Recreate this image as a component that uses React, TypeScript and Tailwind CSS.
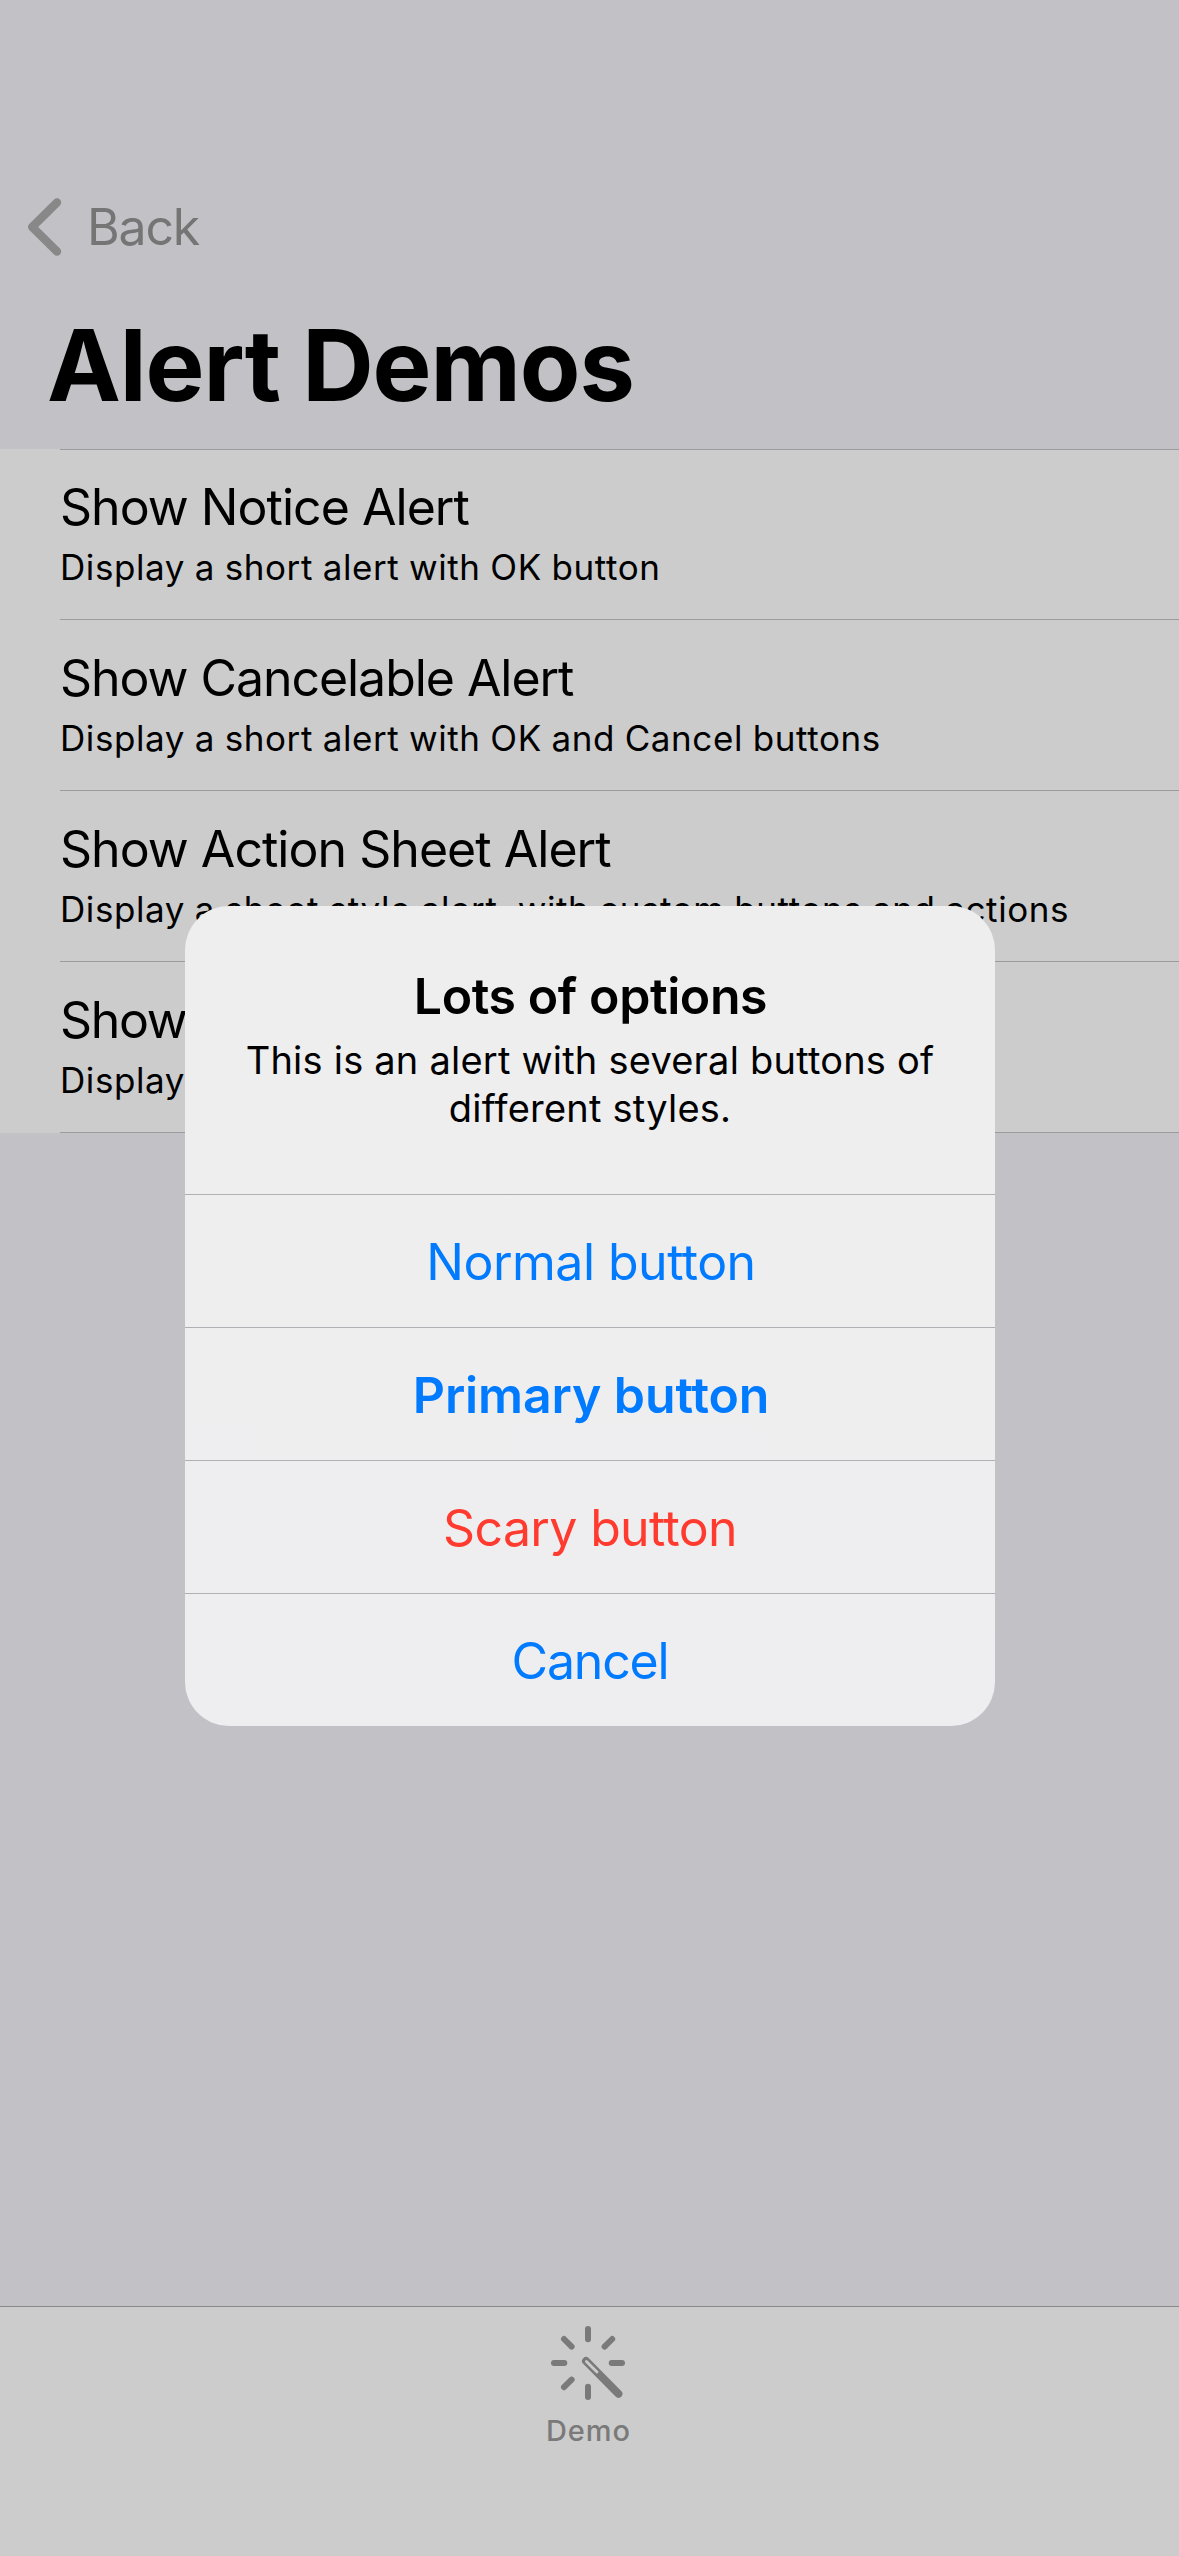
import React from 'react';

const rows = [
  { title: 'Show Notice Alert', text: 'Display a short alert with OK button', style: 'tracking-[-0.97px]' },
  { title: 'Show Cancelable Alert', text: 'Display a short alert with OK and Cancel buttons', style: 'tracking-[-1.05px]' },
  { title: 'Show Action Sheet Alert', text: 'Display a sheet style alert, with custom buttons and actions', style: 'tracking-[-0.97px]' },
  { title: 'Show', text: 'Display', style: 'tracking-[-1.3px]' },
];

const actions = [
  { label: 'Normal button', style: 'text-[#007aff] tracking-[-0.52px] pl-[2px]' },
  { label: 'Primary button', style: 'font-semibold text-[#007aff] tracking-[-0.12px] pl-[2px]' },
  { label: 'Scary button', style: 'text-[#ff3b30] tracking-[-0.66px]' },
  { label: 'Cancel', style: 'text-[#007aff] tracking-[-1.2px]' },
];

function Chevron() {
  return (
    <svg className="ml-[26px] block h-[62px] w-[40px] shrink-0" viewBox="0 0 40 62" fill="none">
      <path d="M31 6.5 6.2 31 31 55.5" stroke="#888888" strokeWidth="8.4" strokeLinecap="round" strokeLinejoin="round" />
    </svg>
  );
}

function WandIcon() {
  return (
    <svg className="block h-[76px] w-[76px]" viewBox="0 0 76 76" fill="none" strokeLinecap="round">
      <g stroke="#7a7a7a" strokeWidth="6">
        <path d="M38 4v10.3M38 61.7V72M4 38h10.3M61.7 38H72M14 14l7.6 7.6M54.6 21.6l7.6-7.6M14 62.2l7.6-7.6" />
      </g>
      <path d="M36 36l32.4 32.8" stroke="#7a7a7a" strokeWidth="8" />
      <path d="M36.4 36.4l10.6 10.6" stroke="#cccccc" strokeWidth="2.8" />
    </svg>
  );
}

export default function App() {
  return (
    <div className="relative flex h-[2556px] w-[1179px] flex-col overflow-hidden bg-[#c2c1c6] font-[Inter,sans-serif] text-black">
      <header className="flex h-[449px] flex-col pt-[160px]">
        <button className="flex h-[134px] items-center text-[50px] leading-[60px] tracking-[-1.2px] text-[#757575]">
          <Chevron />
          <span className="ml-[21px]">Back</span>
        </button>
        <h1 className="pl-[47px] text-[99px] leading-[142px] font-bold tracking-[-1.08px]">Alert Demos</h1>
      </header>

      <ul className="relative bg-[#cccccc]">
        <li className="absolute top-0 right-0 left-[60px] h-px bg-[#9c9c9e]" />
        {rows.map((row) => (
          <li key={row.title} className="ml-[60px] h-[171px] border-b border-[#9c9c9e] pt-[28px] whitespace-nowrap">
            <p className={`text-[50px] leading-[60px] ${row.style}`}>{row.title}</p>
            <p className="mt-[9px] text-[35px] leading-[42px] tracking-[0.6px] [word-spacing:-0.8px]">{row.text}</p>
          </li>
        ))}
      </ul>

      <nav className="mt-auto flex h-[250px] flex-col items-center border-t border-[#88888a] bg-[#cccccc] pt-[18px]">
        <div className="flex flex-col items-center pr-[3px]">
          <WandIcon />
          <span className="mt-[10px] pl-px text-[29px] leading-[40px] font-medium tracking-[0.93px] text-[#7a7a7a]">Demo</span>
        </div>
      </nav>

      <div className="absolute inset-0 flex items-start justify-center pt-[906px] pl-px">
        <div role="alertdialog" className="h-[820px] w-[810px] overflow-hidden rounded-[44px] bg-linear-to-b from-[#eeeeee] to-[#eeeef0]">
          <div className="h-[288px] px-[48px] pt-[60px] text-center">
            <h2 className="pl-px text-[50px] leading-[60px] font-semibold tracking-[-0.4px]">Lots of options</h2>
            <p className="mt-[10px] text-[38px] leading-[48px] tracking-[0.22px]">
              This is an alert with several buttons of different styles.
            </p>
          </div>
          {actions.map((action) => (
            <div key={action.label} className="h-[133px] border-t border-[#b0b0b4] pt-px text-center">
              <button className={`h-full w-full text-[50px] leading-[60px] ${action.style}`}>{action.label}</button>
            </div>
          ))}
        </div>
      </div>
    </div>
  );
}
